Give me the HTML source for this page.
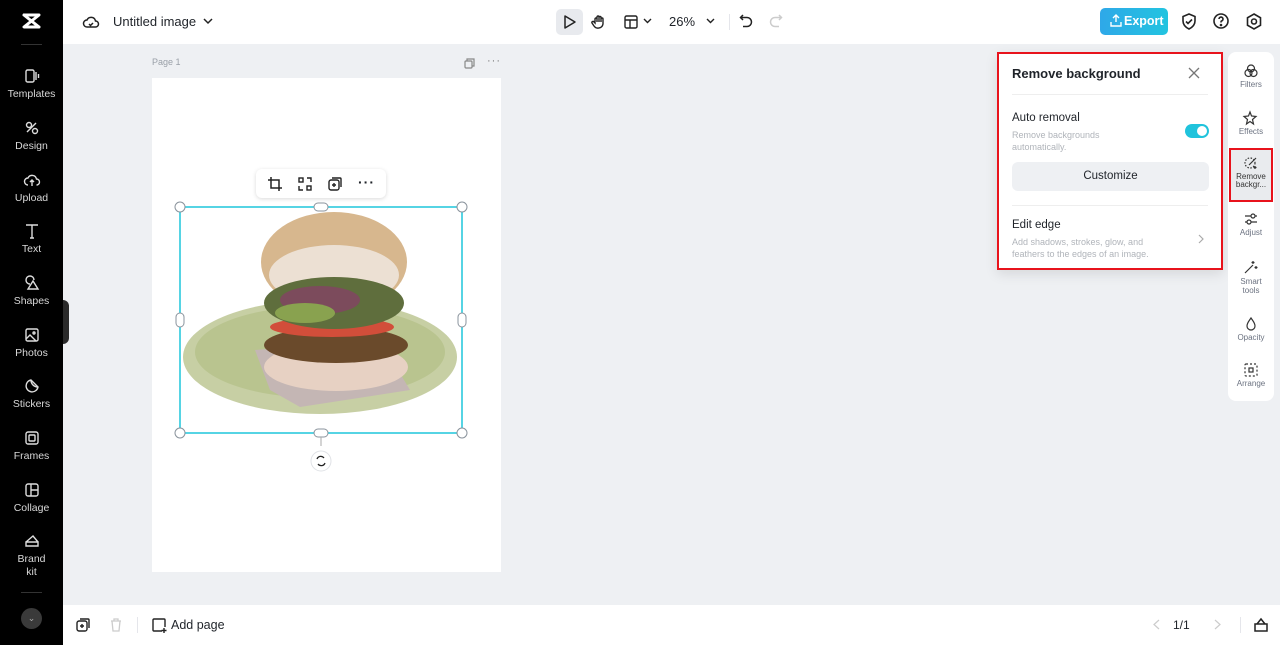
<!DOCTYPE html>
<html><head><meta charset="utf-8"><style>
*{margin:0;padding:0;box-sizing:border-box}
body{width:1280px;height:645px;overflow:hidden;font-family:"Liberation Sans",sans-serif;background:#eef0f3;position:relative;color:#1f2329}
.abs{position:absolute}
.side{left:0;top:0;width:63px;height:645px;background:#000}
.si{position:absolute;left:0;width:63px;text-align:center;color:#d8d8d8;font-size:10.5px}
.si svg{display:block;margin:0 auto 4px}
.top{left:63px;top:0;width:1217px;height:44px;background:#fff}
.bot{left:63px;top:605px;width:1217px;height:40px;background:#fff}
svg{overflow:visible}
.rt{left:1228px;top:52px;width:46px;height:349px;background:#fff;border-radius:8px}
.ri{position:absolute;left:0;width:46px;text-align:center;font-size:8px;color:#6b7280;line-height:8px}
.ri svg{display:block;margin:0 auto 3px}
</style></head><body>
<div class="abs side">
 <svg class="abs" style="left:22px;top:13px" width="19" height="16" viewBox="0 0 19 16"><path d="M2 2h15L2 14h15M2 2l15 12" fill="none" stroke="#fff" stroke-width="3" stroke-linejoin="round" stroke-linecap="round"/></svg>
 <div class="abs" style="left:21px;top:44px;width:21px;height:1px;background:#333"></div>
 <div class="si" style="top:68px"><svg width="16" height="16" viewBox="0 0 16 16" fill="none" stroke="#ddd" stroke-width="1.4"><rect x="2" y="2" width="8" height="12" rx="1.5"/><path d="M12 4v8M14.5 6v4"/></svg>Templates</div>
 <div class="si" style="top:120px"><svg width="16" height="16" viewBox="0 0 16 16" fill="none" stroke="#ddd" stroke-width="1.4"><circle cx="5" cy="5" r="2.5"/><circle cx="11" cy="11" r="2.5"/><path d="M3 12l9-9"/></svg>Design</div>
 <div class="si" style="top:172px"><svg width="16" height="16" viewBox="0 0 16 16" fill="none" stroke="#ddd" stroke-width="1.4"><path d="M4 13a3.5 3.5 0 0 1 0-7 4.5 4.5 0 0 1 8.5 1 3 3 0 0 1 0 6M8 8v6M6 10l2-2 2 2"/></svg>Upload</div>
 <div class="si" style="top:223px"><svg width="16" height="16" viewBox="0 0 16 16" fill="none" stroke="#ddd" stroke-width="1.4"><path d="M2 2h12M8 2v13M6 15h4"/></svg>Text</div>
 <div class="si" style="top:275px"><svg width="16" height="16" viewBox="0 0 16 16" fill="none" stroke="#ddd" stroke-width="1.4"><path d="M6 9A4 4 0 1 1 10 5M9 6l-5 8h10z"/></svg>Shapes</div>
 <div class="si" style="top:327px"><svg width="16" height="16" viewBox="0 0 16 16" fill="none" stroke="#ddd" stroke-width="1.4"><rect x="2" y="2" width="12" height="12" rx="1.5"/><circle cx="10" cy="6" r="1"/><path d="M2 12l4-4 6 6"/></svg>Photos</div>
 <div class="si" style="top:378px"><svg width="16" height="16" viewBox="0 0 16 16" fill="none" stroke="#ddd" stroke-width="1.4"><path d="M14 9A6 6 0 1 1 7 2zM7 2c0 4 3 7 7 7"/></svg>Stickers</div>
 <div class="si" style="top:430px"><svg width="16" height="16" viewBox="0 0 16 16" fill="none" stroke="#ddd" stroke-width="1.4"><rect x="2" y="2" width="12" height="12" rx="2"/><rect x="5" y="5" width="6" height="6" rx="1"/></svg>Frames</div>
 <div class="si" style="top:482px"><svg width="16" height="16" viewBox="0 0 16 16" fill="none" stroke="#ddd" stroke-width="1.4"><rect x="2" y="2" width="12" height="12" rx="2"/><path d="M7 2v12M7 8h7"/></svg>Collage</div>
 <div class="si" style="top:533px;line-height:13px"><svg width="16" height="16" viewBox="0 0 16 16" fill="none" stroke="#ddd" stroke-width="1.4"><path d="M2 9l7-6 5 6M2 9h12v4H2z"/></svg>Brand<br>kit</div>
 <div class="abs" style="left:21px;top:592px;width:21px;height:1px;background:#333"></div>
 <div class="abs" style="left:21px;top:608px;width:21px;height:21px;border-radius:50%;background:#3a3a3a;color:#aaa;font-size:9px;text-align:center;line-height:21px">⌄</div>
</div>
<div class="abs" style="left:63px;top:300px;width:6px;height:44px;background:#2a2a2a;border-radius:0 6px 6px 0"></div>
<div class="abs top">
 <svg class="abs" style="left:20px;top:14px" width="16" height="16" viewBox="0 0 16 16" fill="none" stroke="#222" stroke-width="1.5"><path d="M4 13a3.5 3.5 0 0 1 0-7 4.5 4.5 0 0 1 8.5 1 3 3 0 0 1 0 6zM6 10l1.5 1.5L10 9"/></svg>
 <div class="abs" style="left:50px;top:14px;font-size:13px">Untitled image</div>
 <svg class="abs" style="left:140px;top:17px" width="10" height="8" viewBox="0 0 10 8"><path d="M1 2l4 4 4-4" fill="none" stroke="#222" stroke-width="1.5"/></svg>
 <div class="abs" style="left:493px;top:9px;width:27px;height:26px;border-radius:5px;background:#e8eaee"></div>
 <svg class="abs" style="left:500px;top:15px" width="14" height="14" viewBox="0 0 14 14"><path d="M2 1l10 6-10 6z" fill="none" stroke="#222" stroke-width="1.5" stroke-linejoin="round"/></svg>
 <svg class="abs" style="left:528px;top:14px" width="16" height="16" viewBox="0 0 16 16" fill="none" stroke="#222" stroke-width="1.4"><path d="M4 9V5a1 1 0 0 1 2 0v3V3a1 1 0 0 1 2 0v5V3.5a1 1 0 0 1 2 0V8V5a1 1 0 0 1 2 0v5a5 5 0 0 1-9 2l-2-3a1 1 0 0 1 2-1z"/></svg>
 <svg class="abs" style="left:561px;top:15px" width="14" height="14" viewBox="0 0 14 14" fill="none" stroke="#222" stroke-width="1.4"><rect x="1" y="1" width="12" height="12" rx="1.5"/><path d="M1 5h12M6 5v8"/></svg>
 <svg class="abs" style="left:580px;top:18px" width="9" height="6" viewBox="0 0 9 6"><path d="M1 1l3.5 3.5L8 1" fill="none" stroke="#222" stroke-width="1.4"/></svg>
 <div class="abs" style="left:606px;top:14px;font-size:13px">26%</div>
 <svg class="abs" style="left:643px;top:18px" width="9" height="6" viewBox="0 0 9 6"><path d="M1 1l3.5 3.5L8 1" fill="none" stroke="#222" stroke-width="1.4"/></svg>
 <div class="abs" style="left:666px;top:14px;width:1px;height:16px;background:#e5e6eb"></div>
 <svg class="abs" style="left:676px;top:14px" width="14" height="14" viewBox="0 0 14 14" fill="none" stroke="#222" stroke-width="1.5"><path d="M4 1L1.5 3.5 4 6M1.5 3.5H8a4 4 0 0 1 0 9H4"/></svg>
 <svg class="abs" style="left:706px;top:14px" width="14" height="14" viewBox="0 0 14 14" fill="none" stroke="#ccc" stroke-width="1.5"><path d="M10 1l2.5 2.5L10 6M12.5 3.5H6a4 4 0 0 0 0 9h4"/></svg>
 <div class="abs" style="left:1037px;top:8px;width:68px;height:27px;border-radius:5px;background:linear-gradient(90deg,#2fa8e8,#22c4e0);color:#fff;font-size:12.5px;font-weight:bold;line-height:27px;padding-left:24px;white-space:nowrap">Export</div>
 <svg class="abs" style="left:1047px;top:14px" width="12" height="13" viewBox="0 0 12 13" fill="none" stroke="#fff" stroke-width="1.4"><path d="M6 8V1M3 4l3-3 3 3M1 8v4h10V8"/></svg>
 <svg class="abs" style="left:1118px;top:13px" width="16" height="17" viewBox="0 0 16 17" fill="none" stroke="#222" stroke-width="1.6"><path d="M8 1l6 2.5V8c0 4-3 6.5-6 8-3-1.5-6-4-6-8V3.5zM5 8.5l2 2 4-4"/></svg>
 <svg class="abs" style="left:1150px;top:13px" width="16" height="16" viewBox="0 0 16 16" fill="none" stroke="#222" stroke-width="1.6"><circle cx="8" cy="8" r="7"/><path d="M6 6a2 2 0 1 1 2.5 2c-.5.2-.5.8-.5 1.5"/><circle cx="8" cy="12" r=".5" fill="#222"/></svg>
 <svg class="abs" style="left:1183px;top:13px" width="16" height="17" viewBox="0 0 16 17" fill="none" stroke="#222" stroke-width="1.6"><path d="M8 1l6.5 3.75v7.5L8 16l-6.5-3.75v-7.5z"/><circle cx="8" cy="8.5" r="2.5"/></svg>
</div>
<div class="abs" style="left:152px;top:57px;font-size:9px;color:#9aa0a8">Page 1</div>
<svg class="abs" style="left:464px;top:58px" width="11" height="11" viewBox="0 0 11 11" fill="none" stroke="#888" stroke-width="1.2"><rect x="1" y="3" width="7" height="7" rx="1"/><path d="M3 3V1h7v7H8"/></svg>
<div class="abs" style="left:487px;top:55px;font-size:11px;color:#777;letter-spacing:1px">···</div>
<div class="abs" style="left:152px;top:78px;width:349px;height:494px;background:#fff"></div>
<svg class="abs" style="left:152px;top:78px" width="349" height="494" viewBox="152 78 349 494">
 <ellipse cx="320" cy="357" rx="137" ry="57" fill="#c7cfa4"/>
 <ellipse cx="320" cy="352" rx="125" ry="46" fill="#b9c48f"/>
 <polygon points="255,350 380,340 410,390 300,407 270,390" fill="#c4b6b4"/>
 <ellipse cx="336" cy="367" rx="72" ry="24" fill="#e7d1c3"/>
 <ellipse cx="336" cy="345" rx="72" ry="18" fill="#6a4a2b"/>
 <ellipse cx="332" cy="327" rx="62" ry="10" fill="#d24e3a"/>
 <ellipse cx="334" cy="262" rx="73" ry="50" fill="#d7b78e"/>
 <ellipse cx="334" cy="275" rx="65" ry="30" fill="#ece0d3"/>
 <ellipse cx="334" cy="303" rx="70" ry="26" fill="#5f6e3d"/>
 <ellipse cx="320" cy="300" rx="40" ry="14" fill="#7c4b5c"/>
 <ellipse cx="305" cy="313" rx="30" ry="10" fill="#89a24f"/>
 <path d="M180 207h282v226H180z" fill="none" stroke="#1ec6dc" stroke-width="1.5"/>
 <g fill="#fff" stroke="#8a939c" stroke-width="1"><circle cx="180" cy="207" r="5"/><circle cx="462" cy="207" r="5"/><circle cx="180" cy="433" r="5"/><circle cx="462" cy="433" r="5"/><rect x="314" y="203" width="14" height="8" rx="4"/><rect x="314" y="429" width="14" height="8" rx="4"/><rect x="176" y="313" width="8" height="14" rx="4"/><rect x="458" y="313" width="8" height="14" rx="4"/></g>
 <path d="M321 437v9" stroke="#aaa"/>
 <circle cx="321" cy="461" r="10" fill="#fff" stroke="#e0e2e6"/>
 <path d="M317 459a4 4 0 0 1 7-1M325 463a4 4 0 0 1-7 1" fill="none" stroke="#222" stroke-width="1.3"/>
</svg>
<div class="abs" style="left:256px;top:169px;width:130px;height:29px;background:#fff;border-radius:6px;box-shadow:0 1px 4px rgba(0,0,0,.15)"></div>
<svg class="abs" style="left:268px;top:177px" width="14" height="14" viewBox="0 0 14 14" fill="none" stroke="#222" stroke-width="1.5"><path d="M3 0v11h11M0 3h11v11"/></svg>
<svg class="abs" style="left:298px;top:177px" width="14" height="14" viewBox="0 0 14 14" fill="none" stroke="#222" stroke-width="1.4"><rect x="1" y="1" width="4" height="4"/><rect x="9" y="9" width="4" height="4"/><path d="M9 1h4v4M1 9v4h4"/></svg>
<svg class="abs" style="left:328px;top:177px" width="14" height="14" viewBox="0 0 14 14" fill="none" stroke="#222" stroke-width="1.4"><rect x="1" y="3" width="10" height="10" rx="2"/><path d="M4 1h8a1 1 0 0 1 1 1v8M6 6v4M4 8h4"/></svg>
<div class="abs" style="left:358px;top:174px;font-size:14px;font-weight:bold;letter-spacing:1px">···</div>
<div class="abs" style="left:997px;top:52px;width:226px;height:218px;background:#fff;border:2px solid #e8131c;box-shadow:0 4px 12px rgba(0,0,0,.1)">
 <div class="abs" style="left:13px;top:12px;font-size:13px;font-weight:bold">Remove background</div>
 <svg class="abs" style="left:190px;top:14px" width="10" height="10" viewBox="0 0 10 10"><path d="M0 0l10 10M10 0L0 10" stroke="#777" stroke-width="1.3"/></svg>
 <div class="abs" style="left:13px;top:40px;width:196px;height:1px;background:#eee"></div>
 <div class="abs" style="left:13px;top:58px;font-size:11.5px">Auto removal</div>
 <div class="abs" style="left:13px;top:75px;font-size:9px;color:#b0b4ba;line-height:12px">Remove backgrounds<br>automatically.</div>
 <div class="abs" style="left:186px;top:70px;width:24px;height:14px;border-radius:7px;background:#20c3dc"><div style="position:absolute;right:2px;top:2px;width:10px;height:10px;border-radius:50%;background:#fff"></div></div>
 <div class="abs" style="left:13px;top:108px;width:197px;height:29px;border-radius:6px;background:#eef0f3;font-size:11.5px;text-align:center;line-height:29px">Customize</div>
 <div class="abs" style="left:13px;top:151px;width:196px;height:1px;background:#eee"></div>
 <div class="abs" style="left:13px;top:165px;font-size:11.5px">Edit edge</div>
 <div class="abs" style="left:13px;top:182px;font-size:9px;color:#b0b4ba;line-height:12px">Add shadows, strokes, glow, and<br>feathers to the edges of an image.</div>
 <svg class="abs" style="left:199px;top:180px" width="6" height="10" viewBox="0 0 6 10"><path d="M1 1l4 4-4 4" fill="none" stroke="#aaa" stroke-width="1.2"/></svg>
</div>
<div class="abs rt">
 <div class="ri" style="top:12px"><svg width="14" height="14" viewBox="0 0 14 14" fill="none" stroke="#333" stroke-width="1.2"><circle cx="7" cy="4.5" r="3.5"/><circle cx="4.5" cy="9" r="3.5"/><circle cx="9.5" cy="9" r="3.5"/></svg>Filters</div>
 <div class="ri" style="top:59px"><svg width="14" height="14" viewBox="0 0 14 14" fill="none" stroke="#333" stroke-width="1.2"><path d="M6 1l1.5 4 4.5.5-3.5 3 1 4.5L6 10.5 2.5 13l1-4.5L0 5.5 4.5 5z"/></svg>Effects</div>
 <div class="abs" style="left:1px;top:96px;width:44px;height:54px;background:#e9ebee;border:2px solid #e8131c"></div>
 <div class="ri" style="top:104px"><svg width="14" height="14" viewBox="0 0 14 14" fill="none" stroke="#333" stroke-width="1.2"><circle cx="6" cy="7" r="5" stroke-dasharray="1.5 1.5"/><path d="M5 9l7-7M11 10v3M9.5 11.5h3"/></svg><span style="color:#333">Remove<br>backgr...</span></div>
 <div class="ri" style="top:160px"><svg width="14" height="14" viewBox="0 0 14 14" fill="none" stroke="#333" stroke-width="1.2"><path d="M1 4h12M1 10h12"/><circle cx="9" cy="4" r="2" fill="#fff"/><circle cx="5" cy="10" r="2" fill="#fff"/></svg>Adjust</div>
 <div class="ri" style="top:208px;line-height:9px"><svg width="14" height="14" viewBox="0 0 14 14" fill="none" stroke="#333" stroke-width="1.2"><path d="M1 13l8-8M9 1v3M7.5 2.5h3M12 6v3M10.5 7.5h3"/></svg>Smart<br>tools</div>
 <div class="ri" style="top:265px"><svg width="14" height="14" viewBox="0 0 14 14" fill="none" stroke="#333" stroke-width="1.2"><path d="M7 1C5 4 3 6 3 9a4 4 0 0 0 8 0c0-3-2-5-4-8z"/></svg>Opacity</div>
 <div class="ri" style="top:311px"><svg width="14" height="14" viewBox="0 0 14 14" fill="none" stroke="#333" stroke-width="1.2"><rect x="1" y="1" width="12" height="12" rx="1" stroke-dasharray="2 2"/><rect x="5" y="5" width="4" height="4"/></svg>Arrange</div>
</div>
<div class="abs bot">
 <svg class="abs" style="left:13px;top:13px" width="14" height="14" viewBox="0 0 14 14" fill="none" stroke="#222" stroke-width="1.4"><rect x="1" y="3" width="10" height="10" rx="2"/><path d="M4 1h8a1 1 0 0 1 1 1v8M6 6v4M4 8h4"/></svg>
 <svg class="abs" style="left:47px;top:13px" width="12" height="14" viewBox="0 0 12 14" fill="none" stroke="#ccc" stroke-width="1.3"><path d="M1 3h10M4 3V1h4v2M2 3l1 10h6l1-10"/></svg>
 <div class="abs" style="left:74px;top:12px;width:1px;height:16px;background:#e5e6eb"></div>
 <svg class="abs" style="left:89px;top:13px" width="15" height="15" viewBox="0 0 15 15" fill="none" stroke="#222" stroke-width="1.4"><path d="M10 13H2a1 1 0 0 1-1-1V2a1 1 0 0 1 1-1h10a1 1 0 0 1 1 1v7M12 10v5M9.5 12.5h5"/></svg>
 <div class="abs" style="left:108px;top:13px;font-size:12.5px">Add page</div>
 <svg class="abs" style="left:1090px;top:14px" width="7" height="11" viewBox="0 0 7 11"><path d="M6 1L1 5.5 6 10" fill="none" stroke="#ccc" stroke-width="1.2"/></svg>
 <div class="abs" style="left:1110px;top:13px;font-size:12px">1/1</div>
 <svg class="abs" style="left:1151px;top:14px" width="7" height="11" viewBox="0 0 7 11"><path d="M1 1l5 4.5L1 10" fill="none" stroke="#ccc" stroke-width="1.2"/></svg>
 <div class="abs" style="left:1177px;top:12px;width:1px;height:16px;background:#e5e6eb"></div>
 <svg class="abs" style="left:1191px;top:12px" width="14" height="15" viewBox="0 0 14 15" fill="none" stroke="#222" stroke-width="1.5"><rect x="1" y="7" width="12" height="7"/><path d="M3 7l4-5 4 5"/></svg>
</div>
</body></html>
